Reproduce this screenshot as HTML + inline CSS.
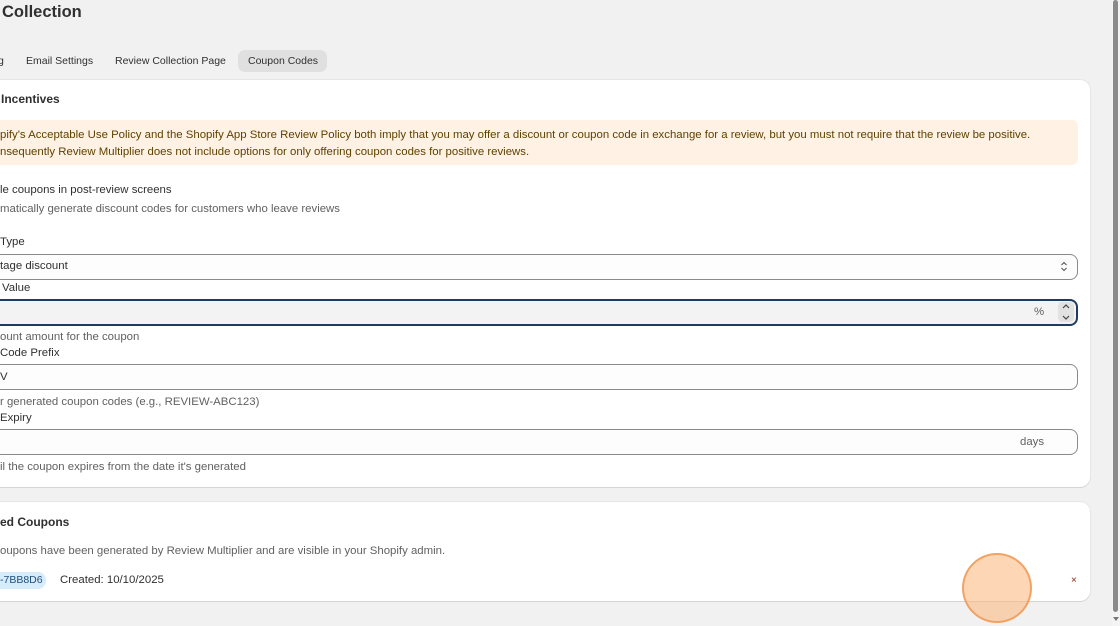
<!DOCTYPE html>
<html><head><style>
body{margin:0;width:1120px;height:626px;background:#f1f1f1;font-family:"Liberation Sans",sans-serif;color:#303030;position:relative;overflow:hidden;font-size:11.4px}
.a{position:absolute;white-space:nowrap}
.card{position:absolute;left:-10px;width:1100px;background:#fff;border-radius:10px;box-shadow:0 1px 0 #d4d4d4,0 0 0 1px #e6e6e6}
.inp{position:absolute;left:-10px;width:1088px;border:1px solid #8a8a8a;border-radius:8px;background:#fdfdfd;box-sizing:border-box}
.sub{color:#616161}
</style></head><body>
<div class="a" style="left:2px;top:3px;font-size:16.5px;font-weight:bold;color:#303030">Collection</div>
<div class="a" style="left:-2px;top:55px;font-size:10.5px;color:#303030">g</div>
<div class="a" style="left:26px;top:55px;font-size:10.5px;color:#303030">Email Settings</div>
<div class="a" style="left:115px;top:55px;font-size:10.5px;color:#303030">Review Collection Page</div>
<div class="a" style="left:238px;top:50px;width:89px;height:22px;background:#e0e0e0;border-radius:7px"></div>
<div class="a" style="left:248px;top:55px;font-size:10.5px;color:#303030">Coupon Codes</div>

<div class="card" style="top:80px;height:407px"></div>
<div class="a" style="left:1px;top:92px;font-size:12px;font-weight:bold">Incentives</div>
<div class="a" style="left:-10px;top:120px;width:1088px;height:45px;background:#fff1e3;border-radius:6px"></div>
<div class="a" style="left:0;top:129px;color:#5e4200">pify's Acceptable Use Policy and the Shopify App Store Review Policy both imply that you may offer a discount or coupon code in exchange for a review, but you must not require that the review be positive.</div>
<div class="a" style="left:0;top:146px;color:#5e4200">nsequently Review Multiplier does not include options for only offering coupon codes for positive reviews.</div>
<div class="a" style="left:0;top:184px">le coupons in post-review screens</div>
<div class="a sub" style="left:0;top:203px">matically generate discount codes for customers who leave reviews</div>
<div class="a" style="left:0;top:236px">Type</div>
<div class="inp" style="top:254px;height:26px"></div>
<div class="a" style="left:0;top:260px">tage discount</div>
<svg class="a" style="left:1060px;top:261px" width="8" height="11" viewBox="0 0 8 11"><path d="M1.5 4L4 1.5 6.5 4M1.5 7L4 9.5 6.5 7" fill="none" stroke="#555" stroke-width="1.1"/></svg>
<div class="a" style="left:2px;top:282px">Value</div>
<div class="inp" style="top:299px;height:27px;border:2px solid #1f3b63;background:#f3f3f3"></div>
<div class="a sub" style="left:1034px;top:306px">%</div>
<div class="a" style="left:1058px;top:302px;width:16px;height:20px;background:#e2e2e2;border-radius:4px"></div>
<svg class="a" style="left:1061px;top:303px" width="10" height="18" viewBox="0 0 10 18"><path d="M2 5L5 2 8 5M2 13L5 16 8 13" fill="none" stroke="#444" stroke-width="1.2"/></svg>
<div class="a sub" style="left:0;top:331px">ount amount for the coupon</div>
<div class="a" style="left:0;top:347px">Code Prefix</div>
<div class="inp" style="top:364px;height:26px"></div>
<div class="a" style="left:0;top:371px">V</div>
<div class="a sub" style="left:0;top:396px">r generated coupon codes (e.g., REVIEW-ABC123)</div>
<div class="a" style="left:0;top:412px">Expiry</div>
<div class="inp" style="top:429px;height:26px"></div>
<div class="a sub" style="left:1020px;top:436px">days</div>
<div class="a sub" style="left:0;top:461px">il the coupon expires from the date it's generated</div>

<div class="card" style="top:502px;height:99px"></div>
<div class="a" style="left:0;top:515px;font-size:12px;font-weight:bold">ed Coupons</div>
<div class="a sub" style="left:0;top:545px">oupons have been generated by Review Multiplier and are visible in your Shopify admin.</div>
<div class="a" style="left:-10px;top:572px;width:56px;height:17px;background:#d6ecfb;border-radius:8px"></div>
<div class="a" style="left:0;top:574px;color:#1f4e79;font-size:10.5px">-7BB8D6</div>
<div class="a" style="left:60px;top:574px">Created: 10/10/2025</div>
<div class="a" style="left:1071px;top:575px;color:#8e1f0b;font-size:10px">×</div>
<div class="a" style="left:962px;top:553px;width:66px;height:66px;border-radius:50%;background:rgba(250,180,120,0.55);border:2px solid rgba(240,150,80,0.8)"></div>

<div class="a" style="left:1112px;top:0;width:8px;height:626px;background:#f4f4f4"></div>
<div class="a" style="left:1113px;top:0;width:5px;height:612px;background:#8a8a8a;border-radius:3px"></div>
<div class="a" style="left:1113px;top:617px;width:0;height:0;border-left:3px solid transparent;border-right:3px solid transparent;border-top:4px solid #777"></div>
</body></html>
